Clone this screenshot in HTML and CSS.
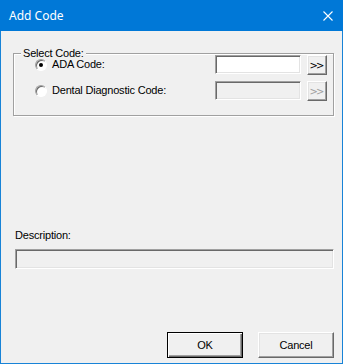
FILE: index.html
```html
<!DOCTYPE html>
<html><head><meta charset="utf-8"><title>Add Code</title>
<link rel="stylesheet" href="styles.css">
</head><body>
<div class="win">
   <div class="titlebar">
      <span class="title">Add Code</span>
      <svg class="close" width="10" height="10" viewBox="0 0 10 10"><path d="M0.5 0.5L9.5 9.5M9.5 0.5L0.5 9.5" stroke="#fff" stroke-width="1.1" fill="none"/></svg>
   </div>
   <div class="client">
      <div class="group">
         <span class="legend">Select Code:</span>
         <div class="rows">
            <label class="opt"><span class="radio on"></span>ADA Code:</label>
            <div class="edit"></div>
            <btn class="more">&gt;&gt;</btn>
            <label class="opt"><span class="radio"></span>Dental Diagnostic Code:</label>
            <div class="edit off"></div>
            <btn class="more off">&gt;&gt;</btn>
         </div>
      </div>
      <div class="desc-label">Description:</div>
      <div class="edit off desc"></div>
      <div class="buttons">
         <btn class="push def">OK</btn>
         <btn class="push">Cancel</btn>
      </div>
   </div>
</div>
</body></html>
```

FILE: styles.css
```css
body
{
	margin     : 0;
	background : #f0f0f0;
}
.win
{
	width       : 343px;
	height      : 364px;
	box-sizing  : border-box;
	border      : 1px solid #1883d7;
	border-top  : 0;
	background  : #f0f0f0;
	display     : flex;
	flex-direction : column;
	font-family : "Liberation Sans", Arial, sans-serif;
	font-size   : 11px;
	letter-spacing : -0.2px;
	color       : #000;
}
.titlebar
{
	height      : 31px;
	margin      : 0 -1px;
	background  : #0078d7;
	display     : flex;
	align-items : center;
	padding     : 0 10px 0 9px;
}
.title
{
	flex        : 1;
	color       : #fff;
	font-family : "Noto Sans", "Open Sans", sans-serif;
	font-size   : 12px;
	letter-spacing : 0;
	margin-top  : -1px;
}
.close { display : block; }
.client
{
	flex           : 1;
	display        : flex;
	flex-direction : column;
}
.group
{
	position   : relative;
	margin     : 22px 8px 0 12px;
	height     : 63px;
	box-sizing : border-box;
	border     : 1px solid #a0a0a0;
	box-shadow : inset 1px 1px #fff, 1px 1px #fff;
}
.legend
{
	position   : absolute;
	left       : 7px;
	top        : -7px;
	padding    : 0 2px;
	line-height: 13px;
	background : #f0f0f0;
}
.rows
{
	display : grid;
	grid-template-columns : 1fr 86px 20px;
	grid-auto-rows : 19px;
	column-gap : 6px;
	row-gap    : 7px;
	padding    : 1px 6px 0 20px;
}
.opt
{
	display     : flex;
	align-items : center;
	line-height : 13px;
}
.radio
{
	position      : relative;
	width         : 12px;
	height        : 12px;
	box-sizing    : border-box;
	border-radius : 50%;
	margin        : 0 5px 0 1px;
	border        : 1px solid;
	border-color  : #a0a0a0 #fff #fff #a0a0a0;
	box-shadow    : inset 1px 1px #696969;
	background    : #fff;
}
.opt:first-child .radio { margin-top : 1px; }
.radio.on::after
{
	content       : "";
	position      : absolute;
	left          : 3px;
	top           : 3px;
	width         : 4px;
	height        : 4px;
	border-radius : 50%;
	background    : #000;
}
.edit
{
	box-sizing   : border-box;
	height       : 19px;
	background   : #fff;
	border       : 1px solid;
	border-color : #a0a0a0 #fff #fff #a0a0a0;
	box-shadow   : inset 1px 1px #696969, inset -1px -1px #e3e3e3;
}
.edit.off { background : #f0f0f0; }
btn
{
	display      : flex;
	align-items  : center;
	justify-content : center;
	box-sizing   : border-box;
	background   : #f0f0f0;
	border       : 1px solid;
	border-color : #fff #696969 #696969 #fff;
	box-shadow   : inset -1px -1px #a0a0a0, inset 1px 1px #e3e3e3;
	cursor       : default;
}
.more
{
	height      : 20px;
	font-family : "DejaVu Sans", sans-serif;
	font-size   : 10px;
	letter-spacing : -2px;
	padding-right : 2px;
}
.more.off { color : #a0a0a0; }
.desc-label
{
	margin      : 113px 0 0 14px;
	line-height : 13px;
}
.desc
{
	margin : 7px 8px 0 14px;
	height : 20px;
}
.buttons
{
	margin-top : auto;
	display    : flex;
	justify-content : flex-end;
	gap        : 15px;
	padding    : 0 8px 5px 0;
}
.push
{
	width  : 76px;
	height : 26px;
}
.push.def
{
	border-color : #000;
	box-shadow   : inset 1px 1px #fff, inset -1px -1px #696969, inset -2px -2px #a0a0a0;
}
```
